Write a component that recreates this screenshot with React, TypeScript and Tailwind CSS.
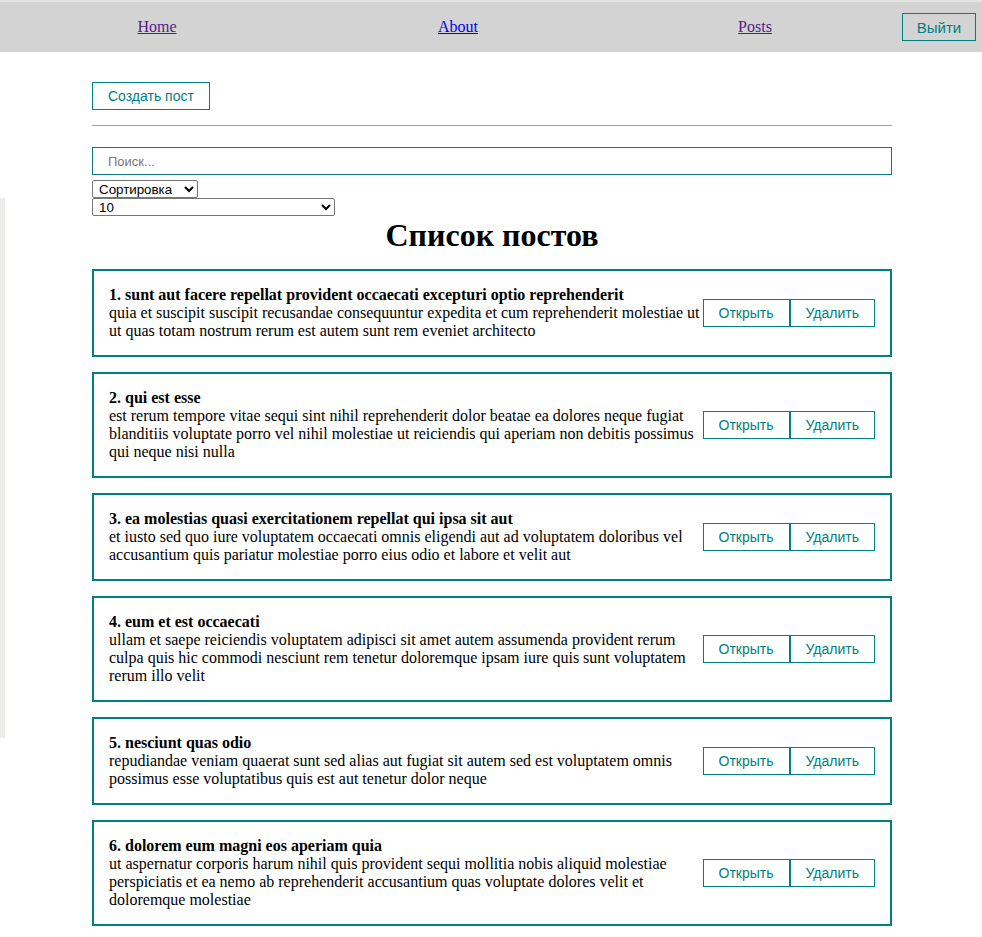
const posts = [
  {
    id: 1,
    title: "sunt aut facere repellat provident occaecati excepturi optio reprehenderit",
    body: "quia et suscipit suscipit recusandae consequuntur expedita et cum reprehenderit molestiae ut ut quas totam nostrum rerum est autem sunt rem eveniet architecto",
  },
  {
    id: 2,
    title: "qui est esse",
    body: "est rerum tempore vitae sequi sint nihil reprehenderit dolor beatae ea dolores neque fugiat blanditiis voluptate porro vel nihil molestiae ut reiciendis qui aperiam non debitis possimus qui neque nisi nulla",
  },
  {
    id: 3,
    title: "ea molestias quasi exercitationem repellat qui ipsa sit aut",
    body: "et iusto sed quo iure voluptatem occaecati omnis eligendi aut ad voluptatem doloribus vel accusantium quis pariatur molestiae porro eius odio et labore et velit aut",
  },
  {
    id: 4,
    title: "eum et est occaecati",
    body: "ullam et saepe reiciendis voluptatem adipisci sit amet autem assumenda provident rerum culpa quis hic commodi nesciunt rem tenetur doloremque ipsam iure quis sunt voluptatem rerum illo velit",
  },
  {
    id: 5,
    title: "nesciunt quas odio",
    body: "repudiandae veniam quaerat sunt sed alias aut fugiat sit autem sed est voluptatem omnis possimus esse voluptatibus quis est aut tenetur dolor neque",
  },
  {
    id: 6,
    title: "dolorem eum magni eos aperiam quia",
    body: "ut aspernatur corporis harum nihil quis provident sequi mollitia nobis aliquid molestiae perspiciatis et ea nemo ab reprehenderit accusantium quas voluptate dolores velit et doloremque molestiae",
  },
];

const btn =
  "border border-[#008080] text-[#008080] bg-transparent px-[15px] py-[5px] text-[14px] leading-[normal] font-['Liberation_Sans',Arial,sans-serif]";

function PostItem({ post }: { post: (typeof posts)[number] }) {
  return (
    <div className="mt-[15px] flex items-center justify-between border-2 border-[#008080] p-[15px]">
      <div className="flex-1">
        <strong>
          {post.id}. {post.title}
        </strong>
        <div>{post.body}</div>
      </div>
      <div className="flex shrink-0">
        <button className={btn}>Открыть</button>
        <button className={btn}>Удалить</button>
      </div>
    </div>
  );
}

export default function App() {
  return (
    <div className="relative min-h-screen bg-white font-['Liberation_Serif','Times_New_Roman',serif] text-[16px] leading-[normal] text-black">
      <div className="h-[2px] bg-[#e4e4e4]" />
      <nav className="flex h-[50px] items-center bg-[#d3d3d3] pl-[7px]">
        <div className="flex">
          <a href="#" className="w-[300px] text-center text-[#551a8b] underline">
            Home
          </a>
          <a href="#" className="w-[302px] text-center text-[#0000ee] underline">
            About
          </a>
          <a href="#" className="w-[292px] text-center text-[#551a8b] underline">
            Posts
          </a>
        </div>
        <button className="ml-[1px] flex h-[28px] w-[74px] items-center justify-center border border-[#008080] font-['Liberation_Sans',Arial,sans-serif] text-[15px] text-[#008080]">
          Выйти
        </button>
      </nav>

      <div className="absolute left-0 top-[198px] h-[540px] w-[5px] bg-[#eeedeb]" />

      <div className="ml-[92px] w-[800px]">
        <button className={btn + " mt-[30px]"}>Создать пост</button>
        <hr className="mt-[15px] mb-[21px] border-t border-[#a0a0a0]" />
        <input
          className="block h-[28px] w-full border border-[#0f7b78] px-[15px] text-[13px] font-['Liberation_Sans',Arial,sans-serif] outline-none placeholder:text-[#757575]"
          placeholder="Поиск..."
        />
        <div className="mt-[5px] flex flex-col items-start font-['Liberation_Sans',Arial,sans-serif] text-[13.33px]">
          <select className="h-[18px] rounded-[2px] border border-[#767676] pl-[2px]" defaultValue="">
            <option value="" disabled>
              Сортировка
            </option>
            <option value="title">По названию</option>
            <option value="body">По описанию</option>
          </select>
          <select className="h-[18px] w-[243px] rounded-[2px] border border-[#767676] pl-[2px]" defaultValue="10">
            <option value="5">5</option>
            <option value="10">10</option>
            <option value="25">25</option>
            <option value="-1">Показать все посты на странице</option>
          </select>
        </div>
        <h1 className="pt-[1px] text-center text-[32px] font-bold">Список постов</h1>
        {posts.map((p) => (
          <PostItem key={p.id} post={p} />
        ))}
      </div>
    </div>
  );
}
